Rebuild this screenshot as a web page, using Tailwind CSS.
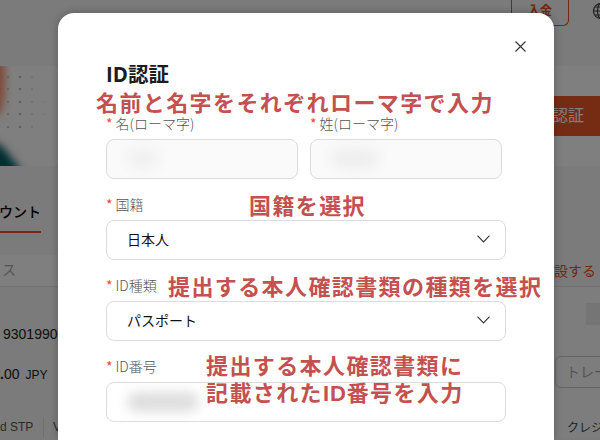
<!DOCTYPE html>
<html lang="ja">
<head>
  <meta charset="UTF-8" />
  <meta name="viewport" content="width=device-width, initial-scale=1.0" />
  <title>ID認証</title>
  <script src="https://cdn.jsdelivr.net/npm/@tailwindcss/browser@4"></script>
</head>
<body class="relative w-[600px] h-[440px] overflow-hidden bg-[#f6f6f6] font-['Liberation_Sans','Noto_Sans_CJK_JP',sans-serif] text-[#222]">

  <!-- account page behind the dialog -->
  <div class="w-[600px] h-[440px] overflow-hidden whitespace-nowrap">
    <header class="h-[66px] flex justify-end items-start gap-[23px]">
      <div class="w-[58px] h-[26px] border border-[#e8501f] border-t-0 rounded-b-md flex justify-center pt-[3px] text-xs leading-4 font-bold text-[#e8501f]">入金</div>
      <svg class="w-2 h-[18px] mt-[2px]" viewBox="0 0 8 18" fill="none" stroke="#444" stroke-width="1.2">
        <circle cx="9" cy="9" r="7.5" /><ellipse cx="9" cy="9" rx="3.5" ry="7.5" /><path d="M1.5 9h15M3 5h12M3 13h12" />
      </svg>
    </header>

    <section class="h-[100px] flex justify-between items-start bg-[#fefefe]">
      <svg class="w-[58px] h-[100px]" viewBox="0 0 58 100">
        <defs><filter id="soft" x="-50%" y="-50%" width="200%" height="200%"><feGaussianBlur stdDeviation="4" /></filter></defs>
        <path d="M-10-10H3Q7 18 2 44L-10 54Z" fill="#ff8c66" filter="url(#soft)" />
        <path d="M-10 75L2 80L24 108H-10Z" fill="#005a60" filter="url(#soft)" />
        <g fill="#c9bcba">
          <circle cx="8" cy="11" r="1" /><circle cx="20" cy="11" r="1.3" /><circle cx="32" cy="11" r=".7" />
          <circle cx="8" cy="23" r="1" /><circle cx="20" cy="23" r="1.3" /><circle cx="32" cy="23" r=".7" />
          <circle cx="8" cy="36" r="1" /><circle cx="20" cy="36" r="1.3" /><circle cx="32" cy="36" r=".7" /><circle cx="44" cy="36" r=".5" />
          <circle cx="8" cy="48" r="1" /><circle cx="20" cy="48" r="1.3" /><circle cx="32" cy="48" r=".7" /><circle cx="44" cy="48" r=".5" />
          <circle cx="8" cy="61" r="1" /><circle cx="20" cy="61" r="1.3" /><circle cx="32" cy="61" r=".7" />
        </g>
      </svg>
      <div class="mt-[30px] w-[60px] h-10 bg-[#ea5826] text-white text-base leading-10 pl-[12px]">認証</div>
    </section>

    <section class="h-[89px] pt-[36px]">
      <div class="w-[41px] h-[31px] border-b-2 border-[#f05228] text-sm leading-5 font-medium text-black flex justify-end">カウント</div>
    </section>

    <section class="h-8 flex justify-between items-center border-b border-[#e2e2e2]">
      <div class="h-full w-[58px] bg-white pl-[2px] text-sm leading-[30px] text-[#aaa]">ス</div>
      <div class="w-[46px] text-sm text-[#e8501f]">設する</div>
    </section>

    <section class="flex justify-between">
      <div class="w-[150px]">
        <div class="mt-[37px] pl-[3px] text-sm leading-5">93019900</div>
        <div class="mt-5 flex items-baseline gap-[6px] text-sm leading-5"><span><b>.</b>00</span><span class="text-xs">JPY</span></div>
        <div class="mt-[33px] flex text-xs leading-5 text-[#555]"><span class="w-11 border-r border-[#e2e2e2]">d STP</span><span class="pl-[9px]">Visa</span></div>
      </div>
      <div class="w-[45px] bg-[#fafafa]">
        <div class="mt-[16px] ml-auto w-[14px] h-[22px] bg-[#eaeaea]"></div>
        <div class="mt-[31px] w-[70px] h-8 border border-[#ccc] rounded-md pl-[10px] text-sm leading-[30px] text-[#aaa]">トレード</div>
        <div class="mt-[30px] pl-[12px] text-xs leading-5 text-[#444]">クレジット</div>
      </div>
    </section>
  </div>

  <div class="absolute inset-0 bg-black/50"></div>

  <!-- ID dialog -->
  <div class="absolute left-[58px] top-[13px] w-[496px] h-[427px] bg-white rounded-t-[16px] shadow-[0_0_8px_rgba(0,0,0,0.25)] pl-12 pt-[49px]">
    <h1 class="text-[20.5px] leading-6 font-bold text-[#1c1c1c] font-['Open_Sans','Noto_Sans_CJK_JP',sans-serif]">ID認証</h1>

    <div class="mt-[27px] flex gap-3 text-[14px] text-[#555] font-['Noto_Sans_CJK_JP',sans-serif] font-light">
      <div class="w-48">
        <div class="h-5 leading-5 flex gap-[3px]"><span class="text-[#f04438] font-normal">*</span>名(ローマ字)</div>
        <div class="mt-[6px] h-10 border border-[#dcdcdc] rounded-lg bg-[#fafafa] pl-5 pt-2">
          <div class="w-8 h-5 rounded-full bg-[#f0f0f0] blur-[6px]"></div>
        </div>
      </div>
      <div class="w-48">
        <div class="h-5 leading-5 flex gap-[3px]"><span class="text-[#f04438] font-normal">*</span>姓(ローマ字)</div>
        <div class="mt-[6px] h-10 border border-[#dcdcdc] rounded-lg bg-[#fafafa] pl-5 pt-2">
          <div class="w-12 h-5 rounded-full bg-[#eeeeee] blur-[6px]"></div>
        </div>
      </div>
    </div>

    <div class="w-[400px] text-[14px] text-[#555] font-['Noto_Sans_CJK_JP',sans-serif] font-light">
      <div class="mt-[15px] h-5 leading-5 flex gap-[3px]"><span class="text-[#f04438] font-normal">*</span>国籍</div>
      <div class="mt-[6px] h-10 border border-[#dcdcdc] rounded-lg flex items-center justify-between pl-5 pr-[15px] text-[#111] font-normal">
        <span class="-mt-px">日本人</span>
        <svg class="w-[13px] h-2 -mt-[3px]" viewBox="0 0 13 8" fill="none" stroke="#333" stroke-width="1.1"><path d="M.5 .7L6.5 7L12.5 .7" /></svg>
      </div>

      <div class="mt-[15px] h-5 leading-5 flex gap-[3px]"><span class="text-[#f04438] font-normal">*</span>ID種類</div>
      <div class="mt-[6px] h-10 border border-[#dcdcdc] rounded-lg flex items-center justify-between pl-5 pr-[15px] text-[#111] font-normal">
        <span class="-mt-px">パスポート</span>
        <svg class="w-[13px] h-2 -mt-[3px]" viewBox="0 0 13 8" fill="none" stroke="#333" stroke-width="1.1"><path d="M.5 .7L6.5 7L12.5 .7" /></svg>
      </div>

      <div class="mt-[15px] h-5 leading-5 flex gap-[3px]"><span class="text-[#f04438] font-normal">*</span>ID番号</div>
      <div class="mt-[6px] h-10 border border-[#dcdcdc] rounded-lg pl-5 pt-[9px]">
        <div class="w-[72px] h-5 rounded-full bg-[#dedede] blur-[6px]"></div>
      </div>
    </div>

    <svg class="absolute left-[457px] top-[28px] w-[11px] h-[11px]" viewBox="0 0 11 11" fill="none" stroke="#333" stroke-width="1.1"><path d="M.5 .5L10.5 10.5M10.5 .5L.5 10.5" /></svg>
  </div>

  <!-- red notes over the form -->
  <div class="font-['Noto_Sans_CJK_JP',sans-serif] font-bold text-[22px] leading-[27px] tracking-[1.4px] text-[#c4504f] whitespace-nowrap">
    <p class="absolute left-[96px] top-[88px]">名前と名字をそれぞれローマ字で入力</p>
    <p class="absolute left-[249px] top-[191px]">国籍を選択</p>
    <p class="absolute left-[168px] top-[272px]">提出する本人確認書類の種類を選択</p>
    <p class="absolute left-[206px] top-[351px]">提出する本人確認書類に<br />記載された<span class="font-['Liberation_Sans',sans-serif] tracking-[0.8px]">ID</span>番号を入力</p>
  </div>
</body>
</html>
